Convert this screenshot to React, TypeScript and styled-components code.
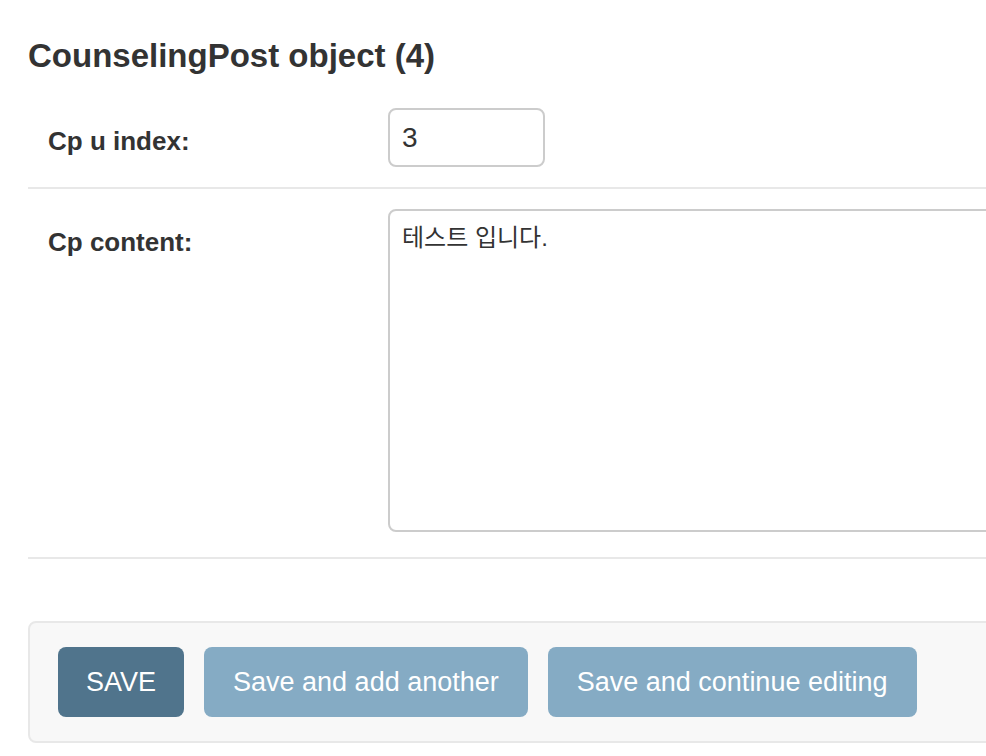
import styled, { createGlobalStyle } from "styled-components";

const GlobalStyle = createGlobalStyle`
	html, body {
		margin: 0;
		padding: 0;
		overflow: hidden;
		background: #ffffff;
	}
	body {
		font-family: "Liberation Sans", Arial, sans-serif;
		color: #333333;
	}
`;

export default function App() {
	return (
		<>
			<GlobalStyle />
			<Page>
				<Title>CounselingPost object (4)</Title>
				<Fieldset>
					<FormRow>
						<Label htmlFor="id_cp_u_index">Cp u index:</Label>
						<NumberInput id="id_cp_u_index" type="text" defaultValue="3" />
					</FormRow>
					<FormRow>
						<Label htmlFor="id_cp_content">Cp content:</Label>
						<TextArea id="id_cp_content" defaultValue="테스트 입니다." />
					</FormRow>
				</Fieldset>
				<SubmitRow>
					<Button type="submit" $primary>
						SAVE
					</Button>
					<Button type="submit">Save and add another</Button>
					<Button type="submit">Save and continue editing</Button>
				</SubmitRow>
			</Page>
		</>
	);
}

const Page = styled.div`
	width: 1400px;
	padding-left: 28px;
`;
const Title = styled.h2`
	margin: 38px 0 14px;
	font-size: 33px;
	line-height: 36px;
	font-weight: 700;
	color: #333333;
`;
const Fieldset = styled.fieldset`
	margin: 0;
	padding: 0;
	border: 0;
	min-width: 0;
`;
const FormRow = styled.div`
	display: flex;
	align-items: flex-start;
	padding: 20px;
	border-bottom: 2px solid #e8e8e8;
`;
const Label = styled.label`
	flex: none;
	width: 320px;
	padding: 18px 20px 0 0;
	font-size: 26px;
	line-height: 30px;
	font-weight: 700;
	color: #333333;
`;
const fieldBase = `
	box-sizing: border-box;
	margin: 0;
	padding: 10px 12px;
	border: 2px solid #cccccc;
	border-radius: 8px;
	background: #ffffff;
	color: #333333;
	outline: none;
`;
const NumberInput = styled.input`
	${fieldBase}
	width: 157px;
	height: 59px;
	font-family: "Liberation Sans", Arial, sans-serif;
	font-size: 28px;
`;
const TextArea = styled.textarea`
	${fieldBase}
	display: block;
	width: 1220px;
	height: 323px;
	margin-bottom: 5px;
	padding-top: 11px;
	resize: none;
	font-family: "Liberation Sans", "Noto Sans CJK KR", sans-serif;
	font-size: 24px;
	line-height: 32px;
`;
const SubmitRow = styled.div`
	display: flex;
	gap: 20px;
	margin-top: 62px;
	padding: 24px 28px;
	background: #f8f8f8;
	border: 2px solid #e8e8e8;
	border-radius: 8px;
`;
const Button = styled.button<{ $primary?: boolean }>`
	height: 70px;
	padding: 0 ${(p) => (p.$primary ? "28px" : "29px")};
	border: 0;
	border-radius: 8px;
	background: ${(p) => (p.$primary ? "#50748c" : "#85abc4")};
	color: #ffffff;
	font-family: "Liberation Sans", Arial, sans-serif;
	font-size: 27px;
	line-height: 30px;
	cursor: pointer;
`;
